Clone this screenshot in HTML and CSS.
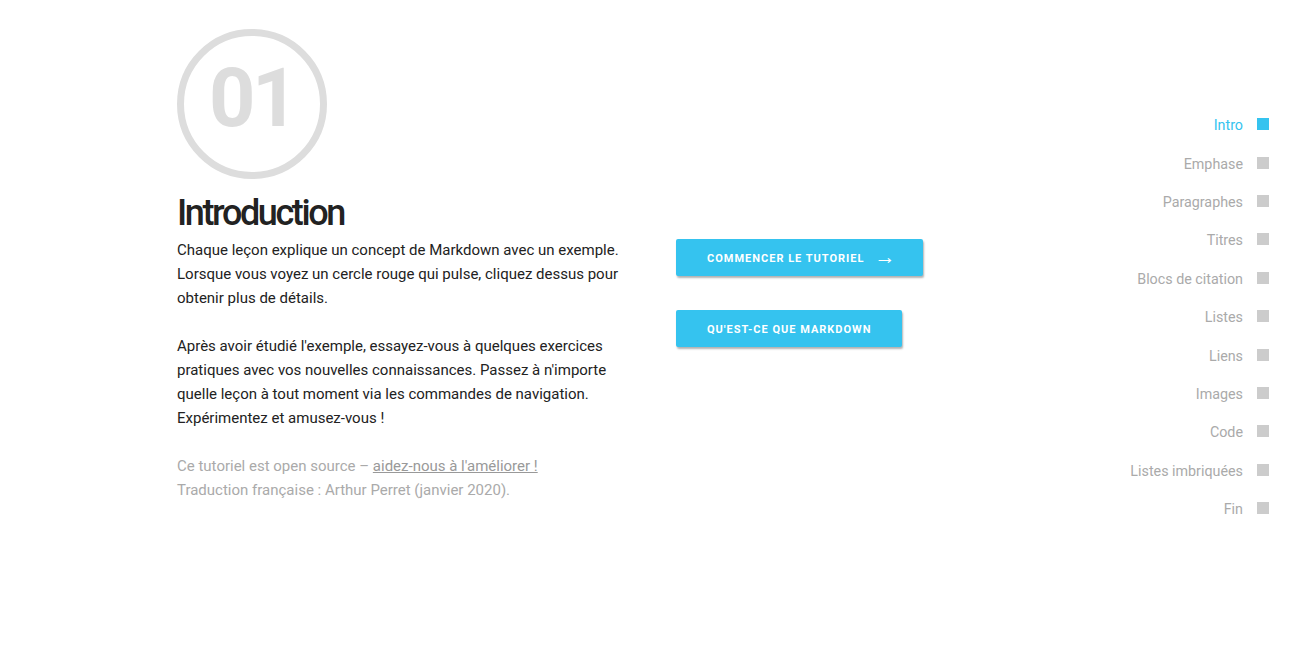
FILE: index.html
```html
<!DOCTYPE html>
<html lang="fr">
<head>
<meta charset="utf-8">
<title>Tutoriel Markdown</title>
<link rel="stylesheet" href="styles.css">
</head>
<body>
<div class="page">
  <main class="lesson">
    <section class="text-col">
      <div class="badge"><span>01</span></div>
      <h1 class="title">Introduction</h1>
      <p>Chaque leçon explique un concept de Markdown avec un exemple. Lorsque vous voyez un cercle rouge qui pulse, cliquez dessus pour obtenir plus de détails.</p>
      <p>Après avoir étudié l'exemple, essayez-vous à quelques exercices pratiques avec vos nouvelles connaissances. Passez à n'importe quelle leçon à tout moment via les commandes de navigation. Expérimentez et amusez-vous !</p>
      <p class="muted">Ce tutoriel est open source – <a href="#">aidez-nous à l'améliorer !</a><br>Traduction française : Arthur Perret (janvier 2020).</p>
    </section>
    <section class="actions">
      <a class="btn" href="#">Commencer le tutoriel <span class="arrow">→</span></a>
      <a class="btn" href="#">Qu'est-ce que Markdown</a>
    </section>
  </main>
  <nav class="toc">
    <a class="toc-item active" href="#">Intro<span class="dot"></span></a>
    <a class="toc-item" href="#">Emphase<span class="dot"></span></a>
    <a class="toc-item" href="#">Paragraphes<span class="dot"></span></a>
    <a class="toc-item" href="#">Titres<span class="dot"></span></a>
    <a class="toc-item" href="#">Blocs de citation<span class="dot"></span></a>
    <a class="toc-item" href="#">Listes<span class="dot"></span></a>
    <a class="toc-item" href="#">Liens<span class="dot"></span></a>
    <a class="toc-item" href="#">Images<span class="dot"></span></a>
    <a class="toc-item" href="#">Code<span class="dot"></span></a>
    <a class="toc-item" href="#">Listes imbriquées<span class="dot"></span></a>
    <a class="toc-item" href="#">Fin<span class="dot"></span></a>
  </nav>
</div>
</body>
</html>
```

FILE: styles.css
```css
* { box-sizing: border-box; }
html, body { margin: 0; padding: 0; background: #fff; }
body {
  font-family: Roboto, "Liberation Sans", sans-serif;
  color: #222;
  width: 1311px;
  height: 653px;
  overflow: hidden;
}
.page {
  display: flex;
  height: 100%;
}
.lesson {
  display: flex;
  padding: 29px 0 0 177px;
}
.text-col {
  width: 450px;
}
.badge {
  width: 150px;
  height: 150px;
  border: 7px solid #dddddd;
  border-radius: 50%;
  display: flex;
  align-items: center;
  justify-content: center;
}
.badge span {
  font-size: 81px;
  font-weight: 700;
  color: #dddddd;
  letter-spacing: -3.5px;
  line-height: 1;
  margin-top: -12px;
}
.title {
  font-size: 36px;
  font-weight: 500;
  letter-spacing: -2.4px;
  margin: 12px 0 3px;
  line-height: 44px;
  color: #222;
}
.text-col p {
  font-size: 15px;
  line-height: 24px;
  margin: 0 0 24px;
  color: #222;
}
.text-col p.muted {
  color: #aaa;
  margin: 0;
}
.muted a { color: #999; }
.actions {
  display: flex;
  flex-direction: column;
  align-items: flex-start;
  gap: 34px;
  padding-top: 210px;
  margin-left: 49px;
}
.btn {
  display: inline-flex;
  align-items: center;
  height: 37px;
  padding: 2px 31px 0 31px;
  background: #35c3ef;
  color: #fff;
  text-decoration: none;
  font-size: 11px;
  font-weight: 700;
  letter-spacing: 1px;
  text-transform: uppercase;
  border-radius: 2px;
  box-shadow: 1px 2px 2px rgba(0, 0, 0, 0.3);
}
.arrow {
  margin-left: 10px;
  margin-right: -3px;
  font-size: 21px;
  font-weight: 300;
  letter-spacing: 0;
  margin-top: -3px;
}
.toc {
  margin-left: auto;
  padding: 106px 42px 0 0;
  display: flex;
  flex-direction: column;
  align-items: flex-end;
}
.toc-item {
  display: flex;
  align-items: center;
  height: 38.4px;
  font-size: 14.3px;
  color: #aaa;
  text-decoration: none;
}
.toc-item.active { color: #35c3ef; }
.dot {
  width: 12px;
  height: 12px;
  background: #ccc;
  margin-left: 14px;
  margin-top: -2px;
}
.toc-item.active .dot { background: #35c3ef; }
```
